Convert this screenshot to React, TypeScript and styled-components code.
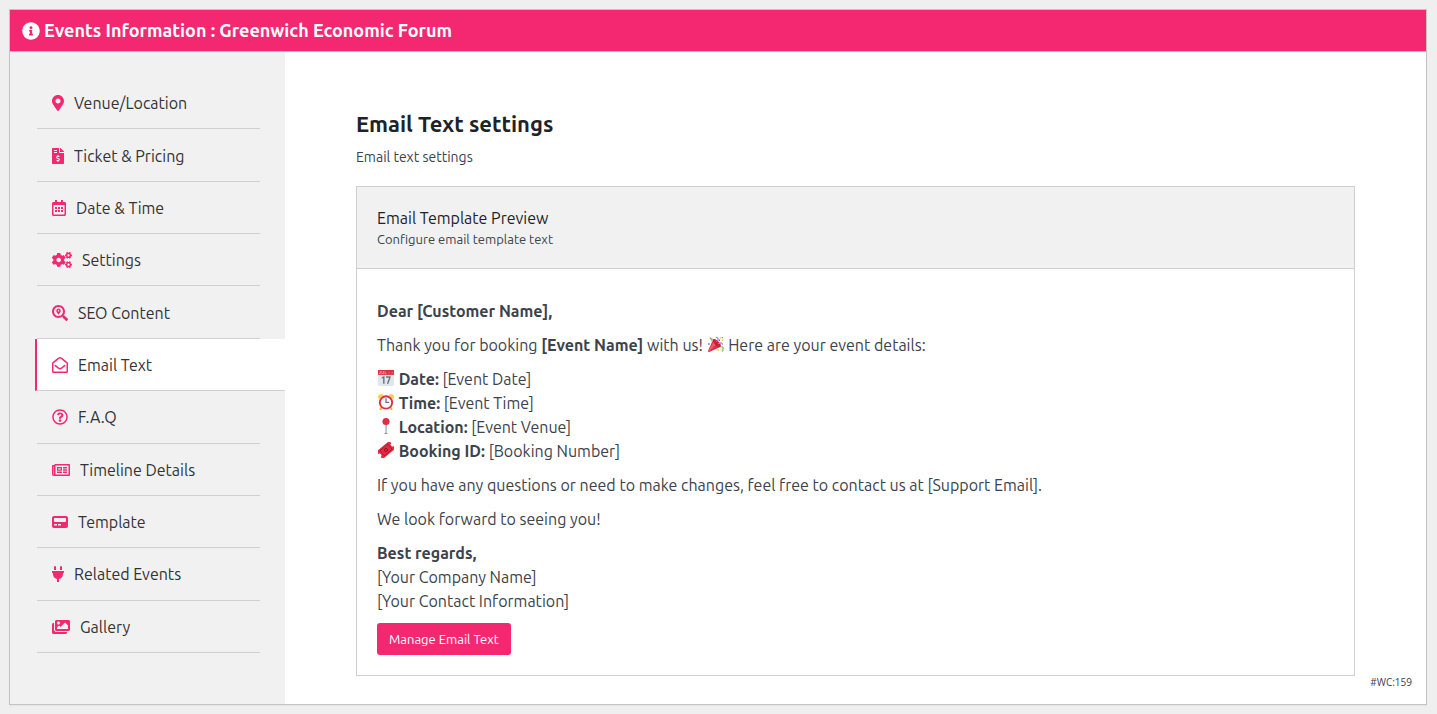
import React from "react";
import styled, { createGlobalStyle, css } from "styled-components";
import {
  FaInfoCircle,
  FaMapMarkerAlt,
  FaFileInvoiceDollar,
  FaRegCalendarAlt,
  FaCogs,
  FaSearchLocation,
  FaRegEnvelopeOpen,
  FaRegQuestionCircle,
  FaRegNewspaper,
  FaPager,
  FaPlug,
  FaImages,
} from "react-icons/fa";

const accent = "#f32871";
const line = "#d0d0d1";
const soft = "#f1f1f1";

const GlobalStyle = createGlobalStyle`
  *, *::before, *::after { box-sizing: border-box; }
  body {
    margin: 0;
    padding: 9px 10px 9px 9px;
    background: #efefef;
    color: #3c434a;
    font-family: "Ubuntu", "Open Sans", sans-serif;
    font-size: 16px;
    line-height: 24px;
  }
`;

const Panel = styled.section`
  border: 1px solid #c3c4c7;
  background: #fff;
  box-shadow: 0 1px 1px rgba(0, 0, 0, 0.04);
`;

const PanelHeader = styled.header`
  display: flex;
  align-items: center;
  gap: 4px;
  padding: 8px 12px;
  border-bottom: 1px solid #c3c4c7;
  background: ${accent};
  color: #fff;

  svg {
    width: 18px;
    height: 18px;
  }
`;

const PanelTitle = styled.h1`
  margin: 0;
  font-size: 18px;
  line-height: 25px;
  font-weight: 700;
`;

const PanelBody = styled.div`
  display: flex;
`;

const Sidebar = styled.nav`
  flex: 0 0 275px;
  padding: 25px 0 51px 25px;
  background: ${soft};
`;

const Menu = styled.ul`
  display: grid;
  grid-auto-rows: 1fr;
  min-height: 576px;
  margin: 0;
  padding: 0;
  list-style: none;
`;

const MenuItem = styled.li<{ $active?: boolean }>`
  display: flex;
  margin-left: 2px;
  margin-right: 25px;
  border-bottom: 1px solid ${line};

  ${(p) =>
    p.$active &&
    css`
      margin-left: 0;
      margin-right: 0;
      border-left: 2px solid ${accent};
      background: #fff;
    `}
`;

const MenuLink = styled.a<{ $iconWidth: number }>`
  flex: 1;
  display: flex;
  align-items: center;
  gap: 10px;
  padding: 1px 15px 0;
  color: #333;
  text-decoration: none;

  svg {
    width: ${(p) => p.$iconWidth}px;
    height: 16px;
    color: ${accent};
  }
`;

const Content = styled.main`
  flex: 1;
  min-width: 0;
  display: flex;
  flex-direction: column;
  padding: 58px 71px 0;
`;

const Heading = styled.h2`
  margin: 0 0 9px;
  color: #1d2327;
  font-size: 22px;
  line-height: 28px;
  font-weight: 700;
`;

const Lead = styled.p`
  margin: 0 0 19px;
  font-size: 14px;
  line-height: 20px;
`;

const Card = styled.article`
  border: 1px solid ${line};
`;

const CardHeader = styled.header`
  padding: 20px;
  border-bottom: 1px solid ${line};
  background: ${soft};
`;

const CardTitle = styled.h3`
  margin: 0;
  color: #1d2327;
  font-size: 16px;
  line-height: 22px;
  font-weight: 400;
`;

const CardHint = styled.p`
  margin: 1px 0 0;
  font-size: 13px;
  line-height: 18px;
`;

const CardBody = styled.div`
  padding: 30px 20px 20px;
`;

const Paragraph = styled.p`
  margin: 0 0 10px;
`;

const Strong = styled.strong`
  font-weight: 700;
`;

const Emoji = styled.svg`
  width: 16px;
  height: 16px;
  margin: 0 1px;
  vertical-align: -1px;
`;

const ManageButton = styled.button`
  display: block;
  padding: 7px 12px;
  border: 0;
  border-radius: 3px;
  background: ${accent};
  color: #fff;
  font: inherit;
  font-size: 13px;
  line-height: 18px;
  cursor: pointer;
`;

const Tag = styled.small`
  align-self: flex-end;
  margin-right: -57px;
  font-family: "Open Sans", sans-serif;
  font-size: 10px;
  line-height: 12px;
`;

const PartyEmoji = () => (
  <Emoji viewBox="0 0 36 36" role="img" aria-label="party popper">
    <path fill="#DD2E44" d="M11.600 7.600c-.2.2-.3.4-.4.6L.2 33.100c-.4 1.100.2 2.700 1.300 2.800.4.1.8 0 1.200-.1l24.900-11c.3-.1.4-.2.6-.4 2-2-.1-7.200-4.800-12-4.700-4.600-9.800-6.800-11.800-4.800z" />
    <path fill="#EA596E" d="M13 12.700L.6 32.200l-.4.9c-.4 1.100.2 2.700 1.300 2.800L17 20z" />
    <path fill="#A0041E" d="M23.400 12.400c4.700 4.700 7 9.900 5 12-1 1-3 .9-5.400-.1-6-2.500-11.500-8.300-12.300-13.800-.2-1.300.1-2.300.8-2.900 2-2 7.200.1 11.900 4.800z" opacity=".35" />
    <path fill="#AA8DD8" d="M18.600 13.300c-1-1 3.300-4.300 2.300-7.100-.5-1.600-1.700-1.500-2.800-1.500-1.500 0-1.600-3 1.300-2.900 3 .1 4.900 2.300 4.500 5.300-.4 3.500-4 7.300-5.300 6.200zM22.500 17.800c-1-1 4.500-5.100 8.700-3.100 3.300 1.500 3.500 5.500 1.200 5.500-1.500 0-.7-2-2.500-2.700-3-1.100-6.400 1.400-7.400.3z" />
    <path fill="#77B255" d="M30.700 22.900c2.600-.5 5.300 1.300 4.900 4.500-.3 2-1.600 2.300-.9 3.800.8 2-.7 4.300-2.500 4.200-1.500-.2-.6-2 .1-2.700 1-1-.7-2.100-.1-4 .7-1.800 1.400-2.900-1.200-2.700-1.800.1-2-2.700-.3-3.100z" />
    <path fill="#77B255" d="M5.500 3.500c1.500 2.400 4 .8 4.800 2.600.7 1.600-1 2.700-.2 4.500.5 1 2.200 1 1.300 2.500-1.200 1.500-3.600-.4-3.800-2.500-.1-1.600.6-2.100-1-2.600C4 7.200 3 5 3.700 3.500c.3-.8 1.300-.9 1.800 0z" />
    <g fill="#9266CC">
      <circle cx="25.500" cy="9.500" r="2" />
      <circle cx="2" cy="18" r="2" />
    </g>
    <g fill="#FFCC4D">
      <circle cx="32.500" cy="9.500" r="2" />
      <circle cx="28" cy="4" r="2" />
      <circle cx="23.500" cy="31.500" r="2" />
      <circle cx="29.500" cy="31.500" r="1.500" />
    </g>
    <circle fill="#5C913B" cx="32.500" cy="3.500" r="1.500" />
  </Emoji>
);

const CalendarEmoji = () => (
  <Emoji viewBox="0 0 36 36" role="img" aria-label="calendar">
    <path fill="#E0E7EC" d="M36 32a4 4 0 0 1-4 4H4a4 4 0 0 1-4-4V9h36z" />
    <path fill="#DD2F45" d="M0 11V0h36v11z" />
    <path fill="#F3AAB9" d="M4 2h2v6.500H2V7h2zM8 2v6.500h5V2h-1.500v5h-2V2zM15 2v6.500h4V7h-2.500V2z" />
    <g fill="#F3AAB9">
      <circle cx="25" cy="6" r="1.200" />
      <circle cx="32" cy="6" r="1.200" />
    </g>
    <path fill="#66757F" d="M11.500 18L8.500 19.500v-3l4-2.200h2.200V31h-3.200zM18 14.300h10.500v2.600L23.300 31h-3.500l5-13.700H18z" />
  </Emoji>
);

const ClockEmoji = () => (
  <Emoji viewBox="0 0 36 36" role="img" aria-label="alarm clock">
    <path fill="#FFCC4D" d="M5 .8C2 1.600 0 4 0 7.200 0 9.500 1.500 11 3 11.500L12.500 3C11.300 1 8 0 5 .8zM31 .8c3 .8 5 3.200 5 6.400 0 2.300-1.500 3.800-3 4.300L23.500 3C24.700 1 28 0 31 .8z" />
    <path fill="#FFAC33" d="M5.500 29.500l4 3.500-2.700 2.800c-1 .8-3.200.3-3.700-1.800zM30.500 29.500l-4 3.500 2.700 2.800c1 .8 3.200.3 3.700-1.800z" />
    <circle fill="#DD2E44" cx="18" cy="19" r="16" />
    <circle fill="#F5F8FA" cx="18" cy="19" r="11.800" />
    <path fill="#66757F" d="M16.600 9.500h2.800v8.200H25v2.700h-8.400z" />
  </Emoji>
);

const PinEmoji = () => (
  <Emoji viewBox="0 0 36 36" role="img" aria-label="pin">
    <ellipse fill="#292F33" opacity=".6" cx="18" cy="34.500" rx="4" ry="1.500" />
    <path fill="#99AAB5" d="M15.800 12h4.400l-1 22.500c0 .8-2.400.8-2.400 0z" />
    <path fill="#CCD6DD" d="M16 12h1.800v22h-.8z" />
    <circle fill="#DD2E44" cx="18" cy="8" r="8" />
  </Emoji>
);

const TicketEmoji = () => (
  <Emoji viewBox="0 0 36 36" role="img" aria-label="ticket">
    <g transform="rotate(-40 18 18)">
      <path
        fill="#DD2E44"
        d="M-1 7h38v7a4 4 0 0 0 0 8v7H-1v-7a4 4 0 0 0 0-8z"
      />
      <path fill="none" stroke="#A0041E" strokeWidth="1.200" d="M6.500 10.500h23v15h-23z" />
      <circle fill="none" stroke="#A0041E" strokeWidth="2" cx="18" cy="18" r="3.500" />
    </g>
  </Emoji>
);

const menu = [
  { label: "Venue/Location", icon: FaMapMarkerAlt, width: 12 },
  { label: "Ticket & Pricing", icon: FaFileInvoiceDollar, width: 12 },
  { label: "Date & Time", icon: FaRegCalendarAlt, width: 14 },
  { label: "Settings", icon: FaCogs, width: 20 },
  { label: "SEO Content", icon: FaSearchLocation, width: 16 },
  { label: "Email Text", icon: FaRegEnvelopeOpen, width: 16, active: true },
  { label: "F.A.Q", icon: FaRegQuestionCircle, width: 16 },
  { label: "Timeline Details", icon: FaRegNewspaper, width: 18 },
  { label: "Template", icon: FaPager, width: 16 },
  { label: "Related Events", icon: FaPlug, width: 12 },
  { label: "Gallery", icon: FaImages, width: 18 },
];

export default function App() {
  return (
    <>
      <GlobalStyle />
      <Panel>
        <PanelHeader>
          <FaInfoCircle aria-hidden />
          <PanelTitle>Events Information : Greenwich Economic Forum</PanelTitle>
        </PanelHeader>
        <PanelBody>
          <Sidebar aria-label="Event sections">
            <Menu>
              {menu.map(({ label, icon: Icon, width, active }) => (
                <MenuItem key={label} $active={active}>
                  <MenuLink href="#" $iconWidth={width} aria-current={active ? "page" : undefined}>
                    <Icon aria-hidden />
                    {label}
                  </MenuLink>
                </MenuItem>
              ))}
            </Menu>
          </Sidebar>
          <Content>
            <Heading>Email Text settings</Heading>
            <Lead>Email text settings</Lead>
            <Card>
              <CardHeader>
                <CardTitle>Email Template Preview</CardTitle>
                <CardHint>Configure email template text</CardHint>
              </CardHeader>
              <CardBody>
                <Paragraph>
                  <Strong>Dear [Customer Name],</Strong>
                </Paragraph>
                <Paragraph>
                  Thank you for booking <Strong>[Event Name]</Strong> with us! <PartyEmoji /> Here are your event
                  details:
                </Paragraph>
                <Paragraph>
                  <CalendarEmoji /> <Strong>Date:</Strong> [Event Date]
                  <br />
                  <ClockEmoji /> <Strong>Time:</Strong> [Event Time]
                  <br />
                  <PinEmoji /> <Strong>Location:</Strong> [Event Venue]
                  <br />
                  <TicketEmoji /> <Strong>Booking ID:</Strong> [Booking Number]
                </Paragraph>
                <Paragraph>
                  If you have any questions or need to make changes, feel free to contact us at [Support Email].
                </Paragraph>
                <Paragraph>We look forward to seeing you!</Paragraph>
                <Paragraph>
                  <Strong>Best regards,</Strong>
                  <br />
                  [Your Company Name]
                  <br />
                  [Your Contact Information]
                </Paragraph>
                <ManageButton type="button">Manage Email Text</ManageButton>
              </CardBody>
            </Card>
            <Tag>#WC:159</Tag>
          </Content>
        </PanelBody>
      </Panel>
    </>
  );
}
